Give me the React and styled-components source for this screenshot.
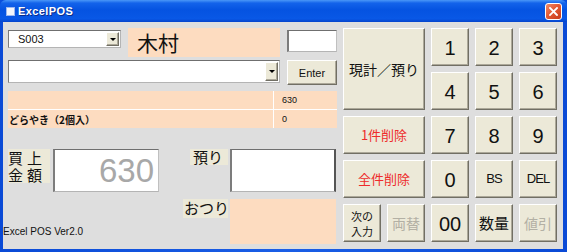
import React from "react";
import styled, { createGlobalStyle, css } from "styled-components";

const FACE = "#ece9d8";
const PEACH = "#fddcc0";
const FORM = "#dedede";
const UI_FONT = `"Liberation Sans", "Noto Sans CJK JP", sans-serif`;
const JP_FONT = `"Noto Sans CJK JP", "Liberation Sans", sans-serif`;

const GlobalStyle = createGlobalStyle`
  html, body {
    margin: 0;
    padding: 0;
    background: #fff;
  }
  body {
    font-family: ${UI_FONT};
  }
`;

const sunken = css`
  border: 1px solid #b4b4b4;
  border-top-color: #6f6f6f;
  border-left-color: #7c7c7c;
`;

const raised = css`
  border: 1px solid;
  border-color: #fff #716f64 #716f64 #fff;
  box-shadow: inset -1px -1px 0 #aca899;
`;

const Window = styled.div`
  width: 567px;
  height: 252px;
  display: flex;
  flex-direction: column;
  background: #0a4fdc;
`;

const TitleBar = styled.div`
  height: 22px;
  flex: none;
  display: flex;
  align-items: center;
  padding: 0 5px 0 6px;
  background: linear-gradient(
    180deg,
    #4a97f8 0%,
    #1363ea 14%,
    #0553e1 45%,
    #0958e6 85%,
    #0544cc 100%
  );
  border-radius: 6px 6px 0 0;
`;

const TitleIcon = styled.div`
  width: 7px;
  height: 7px;
  background: #f4f6fb;
  border: 1px solid #9db8ee;
  margin-right: 3px;
`;

const Title = styled.div`
  flex: 1;
  color: #fff;
  font-family: "Liberation Sans", sans-serif;
  font-weight: bold;
  font-size: 11px;
  letter-spacing: 0.4px;
  text-shadow: 1px 1px 0 #0a2d8a;
`;

const CloseButton = styled.div`
  width: 17px;
  height: 17px;
  box-sizing: border-box;
  border: 1px solid #fff;
  border-radius: 3px;
  background: linear-gradient(135deg, #f08a6a 0%, #e35a34 45%, #c83c1c 100%);
  display: flex;
  align-items: center;
  justify-content: center;
`;

const Frame = styled.div`
  flex: 1;
  display: flex;
  padding: 0 4px 3px 3px;
  background: linear-gradient(90deg, #0a4ad6, #1a5ee6 50%, #0a4ad6);
`;

const Client = styled.div`
  flex: 1;
  display: flex;
  gap: 5px;
  padding: 6px 0 0 5px;
  background: ${FORM};
`;

const LeftPane = styled.div`
  width: 330px;
  display: flex;
  flex-direction: column;
`;

const Row = styled.div`
  display: flex;
  align-items: flex-start;
  gap: 7px;
  margin-top: ${(p) => p.$mt || 0}px;
`;

const Combo = styled.div`
  box-sizing: border-box;
  width: ${(p) => p.$w}px;
  height: ${(p) => p.$h}px;
  margin-top: ${(p) => p.$mt || 0}px;
  background: #fff;
  ${sunken};
  display: flex;
  align-items: center;
  padding-left: 9px;
  font-size: 11px;
  color: #111;
`;

const ComboText = styled.span`
  flex: 1;
`;

const DropButton = styled.div`
  width: 13px;
  align-self: stretch;
  margin: 1px;
  box-sizing: border-box;
  background: ${FACE};
  ${raised};
  display: flex;
  align-items: center;
  justify-content: center;

  &::after {
    content: "";
    border-left: 3px solid transparent;
    border-right: 3px solid transparent;
    border-top: 3px solid #000;
  }
`;

const NameLabel = styled.div`
  width: 152px;
  height: 29px;
  background: ${PEACH};
  font-family: ${JP_FONT};
  font-size: 21px;
  line-height: 29px;
  padding-left: 9px;
  box-sizing: border-box;
  color: #111;
`;

const TextBox = styled.div`
  box-sizing: border-box;
  width: ${(p) => p.$w}px;
  height: ${(p) => p.$h}px;
  margin-top: ${(p) => p.$mt || 0}px;
  background: ${(p) => p.$bg || "#fff"};
  ${(p) => (p.$flat ? "" : sunken)};
  border-left-width: ${(p) => (p.$flat ? 0 : 2)}px;
  border-right-color: ${(p) => (p.$darkRight ? "#555" : "#c0c0c0")};
  border-right-width: ${(p) => (p.$darkRight ? 2 : 1)}px;
  display: flex;
  align-items: center;
  justify-content: flex-end;
  padding-right: 4px;
  font-family: "Liberation Sans", sans-serif;
  font-size: 33px;
  color: #a8a8a8;
`;

const Button = styled.div`
  box-sizing: border-box;
  width: 50px;
  height: 25px;
  background: ${FACE};
  ${raised};
  display: flex;
  align-items: center;
  justify-content: center;
  font-size: 11px;
  color: #111;
`;

const ListBox = styled.div`
  margin-top: 6px;
  width: 329px;
  display: grid;
  grid-template-columns: 265px 1fr;
  grid-auto-rows: 18px;
  gap: 1px;
  background: #fff;
`;

const Cell = styled.div`
  background: ${PEACH};
  display: flex;
  align-items: center;
  padding-left: ${(p) => (p.$num ? 8 : 1)}px;
  font-family: ${(p) => (p.$num ? UI_FONT : JP_FONT)};
  font-size: ${(p) => (p.$num ? 9 : 10)}px;
  font-weight: ${(p) => (p.$num ? "normal" : "bold")};
  color: #111;
`;

const Bottom = styled.div`
  margin-top: 21px;
  display: flex;
  gap: 24px;
`;

const TotalColumn = styled.div`
  width: 151px;
  display: flex;
  flex-direction: column;
  justify-content: space-between;
`;

const TotalRow = styled.div`
  display: flex;
  align-items: flex-start;
  gap: 3px;
`;

const Caption = styled.div`
  background: ${FACE};
  font-family: ${JP_FONT};
  color: #111;
  font-size: ${(p) => p.$size || 15}px;
  line-height: ${(p) => p.$lh || 16}px;
  letter-spacing: ${(p) => p.$ls || 0}px;
  justify-self: end;
  width: ${(p) => p.$w}px;
  height: ${(p) => p.$h}px;
  box-sizing: border-box;
  padding-left: ${(p) => p.$pl || 0}px;
  white-space: nowrap;
`;

const CaptionLine = styled.span`
  display: block;
  height: 17px;
  line-height: 17px;
`;

const Footer = styled.div`
  margin-left: -5px;
  margin-bottom: 6px;
  font-family: "Liberation Sans", sans-serif;
  font-size: 10px;
  line-height: 12px;
  color: #111;
`;

const PayGrid = styled.div`
  display: grid;
  grid-template-columns: 45px 106px;
  column-gap: 2px;
  row-gap: 7px;
  align-items: start;
`;

const Keypad = styled.div`
  display: grid;
  grid-template-columns: repeat(5, 38px);
  grid-auto-rows: 38px;
  gap: 6px;
  align-self: flex-start;
`;

const Key = styled.div`
  grid-column: span ${(p) => p.$cols || 1};
  grid-row: span ${(p) => p.$rows || 1};
  box-sizing: border-box;
  background: ${FACE};
  ${raised};
  display: flex;
  align-items: center;
  justify-content: center;
  text-align: center;
  font-family: ${(p) => (p.$jp ? JP_FONT : UI_FONT)};
  font-size: ${(p) => p.$size || 20}px;
  line-height: 1.1;
  letter-spacing: ${(p) => p.$ls || 0}px;
  color: ${(p) => p.$color || "#111"};
  padding-top: 1px;
`;

const KeyLine = styled.span`
  display: block;
  height: 15px;
  line-height: 15px;
`;

const keys = [
  { label: "現計／預り", cols: 2, rows: 2, size: 14, jp: true },
  { label: "1" },
  { label: "2" },
  { label: "3" },
  { label: "4" },
  { label: "5" },
  { label: "6" },
  { label: "1件削除", cols: 2, size: 13, jp: true, color: "#ee2b2b" },
  { label: "7" },
  { label: "8" },
  { label: "9" },
  { label: "全件削除", cols: 2, size: 13, jp: true, color: "#ee2b2b" },
  { label: "0" },
  { label: "BS", size: 13, ls: -1 },
  { label: "DEL", size: 13, ls: -1 },
  { label: "次の\n入力", size: 11, jp: true },
  { label: "両替", size: 14, jp: true, color: "#b3b0a4" },
  { label: "00" },
  { label: "数量", size: 15, jp: true },
  { label: "値引", size: 14, jp: true, color: "#b3b0a4" },
];

const App = () => {
  return (
    <>
      <GlobalStyle />
      <Window>
        <TitleBar>
          <TitleIcon />
          <Title>ExcelPOS</Title>
          <CloseButton>
            <svg width="9" height="9" viewBox="0 0 9 9">
              <path
                d="M1 1 L8 8 M8 1 L1 8"
                stroke="#fff"
                strokeWidth="1.8"
                strokeLinecap="square"
              />
            </svg>
          </CloseButton>
        </TitleBar>
        <Frame>
          <Client>
            <LeftPane>
              <Row>
                <Combo $w={113} $h={18} $mt={2}>
                  <ComboText>S003</ComboText>
                  <DropButton />
                </Combo>
                <NameLabel>木村</NameLabel>
                <TextBox $w={50} $h={22} $mt={2} />
              </Row>
              <Row $mt={3}>
                <Combo $w={272} $h={23}>
                  <ComboText />
                  <DropButton />
                </Combo>
                <Button>Enter</Button>
              </Row>
              <ListBox>
                <Cell />
                <Cell $num>630</Cell>
                <Cell>どらやき（2個入）</Cell>
                <Cell $num>0</Cell>
              </ListBox>
              <Bottom>
                <TotalColumn>
                  <TotalRow>
                    <Caption $w={42} $h={34} $size={15} $ls={4}>
                      <CaptionLine>買上</CaptionLine>
                      <CaptionLine>金額</CaptionLine>
                    </Caption>
                    <TextBox $w={106} $h={43}>
                      630
                    </TextBox>
                  </TotalRow>
                  <Footer>Excel POS Ver2.0</Footer>
                </TotalColumn>
                <PayGrid>
                  <Caption $w={38} $h={16} $pl={3}>
                    預り
                  </Caption>
                  <TextBox $w={106} $h={43} $darkRight />
                  <Caption $w={45} $h={19} $lh={18} $pl={1}>
                    おつり
                  </Caption>
                  <TextBox $w={106} $h={45} $bg={PEACH} $flat />
                </PayGrid>
              </Bottom>
            </LeftPane>
            <Keypad>
              {keys.map((k, idx) => (
                <Key
                  key={idx}
                  $cols={k.cols}
                  $rows={k.rows}
                  $size={k.size}
                  $ls={k.ls}
                  $jp={k.jp}
                  $color={k.color}
                >
                  {k.label.includes("\n") ? (
                    <span>
                      {k.label.split("\n").map((line, i) => (
                        <KeyLine key={i}>{line}</KeyLine>
                      ))}
                    </span>
                  ) : (
                    k.label
                  )}
                </Key>
              ))}
            </Keypad>
          </Client>
        </Frame>
      </Window>
    </>
  );
};

export default App;
